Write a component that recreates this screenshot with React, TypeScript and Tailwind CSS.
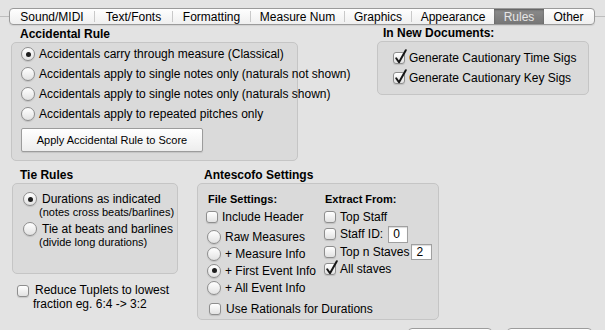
import React from "react";

function Radio({ checked = false }: { checked?: boolean }) {
  return (
    <span className="flex h-[14px] w-[14px] shrink-0 items-center justify-center rounded-full border border-[#8e8e8e] bg-linear-to-b from-[#ffffff] to-[#e2e2e2] shadow-[0_1px_1px_rgba(0,0,0,0.12)]">
      {checked && <span className="h-[5px] w-[5px] rounded-full bg-[#1e1e1e]" />}
    </span>
  );
}

function Check({ checked = false }: { checked?: boolean }) {
  return (
    <span className="relative block h-[12px] w-[12px] shrink-0 rounded-[3px] border border-[#8e8e8e] bg-linear-to-b from-[#ffffff] to-[#e2e2e2] shadow-[0_1px_1px_rgba(0,0,0,0.12)]">
      {checked && (
        <svg className="absolute left-[0px] top-[-4px] overflow-visible" width="14" height="16" viewBox="0 0 14 16">
          <path d="M2.2 9.2 L5 13.2 L11.8 1.2" fill="none" stroke="#161616" strokeWidth="2" strokeLinecap="round" strokeLinejoin="round" />
        </svg>
      )}
    </span>
  );
}

const tabs: { label: string; w: string; sep: boolean; active?: boolean }[] = [
  { label: "Sound/MIDI", w: "w-[84px]", sep: true },
  { label: "Text/Fonts", w: "w-[77px]", sep: true },
  { label: "Formatting", w: "w-[77px]", sep: true },
  { label: "Measure Num", w: "w-[93px]", sep: true },
  { label: "Graphics", w: "w-[66px]", sep: true },
  { label: "Appearance", w: "w-[82px]", sep: false },
  { label: "Rules", w: "w-[50px]", sep: false, active: true },
  { label: "Other", w: "w-[49px]", sep: false },
];

export default function App() {
  return (
    <div className="relative h-[330px] w-[605px] overflow-hidden bg-[#e3e3e3] font-['Liberation_Sans',Arial,sans-serif] text-[12px] leading-[14px] text-black">
      {/* Tab bar */}
      <div className="relative h-[25px] pl-[9px] pt-[8px]">
        <div className="absolute left-0 right-0 top-[16px] h-px bg-[#bdbdbd]" />
        <div className="relative flex h-[17px] w-[586px] overflow-hidden rounded-[4px] border border-[#9a9a9a] bg-linear-to-b from-[#fefefe] to-[#efefef] shadow-[0_1px_1px_rgba(0,0,0,0.08)]">
          {tabs.map((t) => (
            <React.Fragment key={t.label}>
              <div
                className={
                  t.w +
                  " flex h-full items-center justify-center " +
                  (t.active
                    ? "bg-linear-to-b from-[#8c8c8c] to-[#767676] text-[#e6e6e6] shadow-[inset_0_1px_2px_rgba(0,0,0,0.35)]"
                    : "text-black")
                }
              >
                {t.label}
              </div>
              {t.sep && <span className="h-[11px] w-px self-center bg-[#c9c9c9]" />}
            </React.Fragment>
          ))}
        </div>
      </div>

      {/* Row 1 */}
      <div className="mt-[1px] flex items-start">
        <div className="ml-[11px] w-[287px]">
          <div className="h-[16px] pl-[9px] font-bold leading-[16px]">Accidental Rule</div>
          <div className="h-[119px] rounded-[5px] border border-[#c5c5c5] bg-[#dadada] pl-[9px] pt-[1px]">
            {[
              "Accidentals carry through measure (Classical)",
              "Accidentals apply to single notes only (naturals not shown)",
              "Accidentals apply to single notes only (naturals shown)",
              "Accidentals apply to repeated pitches only",
            ].map((s, i) => (
              <div key={s} className="flex h-[20px] items-center whitespace-nowrap">
                <Radio checked={i === 0} />
                <span className="ml-[4px]">{s}</span>
              </div>
            ))}
            <div className="mt-[4px] flex h-[24px] w-[182px] items-center justify-center rounded-[2px] border border-[#9c9c9c] bg-linear-to-b from-[#ffffff] to-[#ededed] text-[11px] shadow-[0_1px_1px_rgba(0,0,0,0.1)]">
              Apply Accidental Rule to Score
            </div>
          </div>
        </div>

        <div className="ml-[79px] w-[212px]">
          <div className="h-[15px] pl-[6px] font-bold leading-[15px]">In New Documents:</div>
          <div className="h-[54px] rounded-[5px] border border-[#c5c5c5] bg-[#dadada] pl-[15px] pt-[6px]">
            {["Generate Cautionary Time Sigs", "Generate Cautionary Key Sigs"].map((s) => (
              <div key={s} className="flex h-[20px] items-center whitespace-nowrap">
                <Check checked />
                <span className="ml-[4px]">{s}</span>
              </div>
            ))}
          </div>
        </div>
      </div>

      {/* Row 2 */}
      <div className="mt-[6px] flex items-start">
        <div className="ml-[12px] w-[166px]">
          <div className="h-[16px] pl-[8px] font-bold leading-[16px]">Tie Rules</div>
          <div className="h-[91px] rounded-[5px] border border-[#c5c5c5] bg-[#dadada] pl-[10px] pt-[8px]">
            <div className="flex items-start">
              <Radio checked />
              <div className="ml-[5px] flex flex-col whitespace-nowrap">
                <span className="leading-[14px]">Durations as indicated</span>
                <span className="ml-[-3px] text-[11px] leading-[12px]">(notes cross beats/barlines)</span>
              </div>
            </div>
            <div className="mt-[4px] flex items-start">
              <Radio />
              <div className="ml-[5px] flex flex-col whitespace-nowrap">
                <span className="leading-[14px]">Tie at beats and barlines</span>
                <span className="ml-[-3px] text-[11px] leading-[12px]">(divide long durations)</span>
              </div>
            </div>
          </div>
          <div className="ml-[5px] mt-[9px] flex items-start">
            <span className="mt-[2px]">
              <Check />
            </span>
            <div className="ml-[6px] flex flex-col whitespace-nowrap">
              <span>Reduce Tuplets to lowest</span>
              <span className="ml-[-2px]">fraction eg. 6:4 -&gt; 3:2</span>
            </div>
          </div>
        </div>

        <div className="ml-[19px] w-[242px]">
          <div className="h-[16px] pl-[7px] font-bold leading-[16px]">Antescofo Settings</div>
          <div className="h-[137px] rounded-[5px] border border-[#c5c5c5] bg-[#dadada] pt-[8px]">
            <div className="flex pl-[8px]">
              <div className="w-[118px]">
                <div className="h-[14px] pl-[2px] text-[11px] font-bold leading-[14px]">File Settings:</div>
                <div className="mt-[3px] flex h-[16px] items-center whitespace-nowrap">
                  <Check />
                  <span className="ml-[4px]">Include Header</span>
                </div>
                <div className="mt-[4px]">
                  {["Raw Measures", "+ Measure Info", "+ First Event Info", "+ All Event Info"].map((s, i) => (
                    <div
                      key={s}
                      className={(i === 0 ? "h-[16px]" : "h-[17px]") + " flex items-center whitespace-nowrap pl-[1px]"}
                    >
                      <Radio checked={i === 2} />
                      <span className="ml-[4px]">{s}</span>
                    </div>
                  ))}
                </div>
              </div>
              <div className="flex-1">
                <div className="h-[14px] pl-[1px] text-[11px] font-bold leading-[14px]">Extract From:</div>
                <div className="mt-[3px] flex h-[16px] items-center whitespace-nowrap">
                  <Check />
                  <span className="ml-[4px]">Top Staff</span>
                </div>
                <div className="flex h-[18px] items-center whitespace-nowrap">
                  <Check />
                  <span className="ml-[4px]">Staff ID:</span>
                  <span className="ml-[5px] flex h-[17px] w-[20px] items-center border border-[#a0a0a0] bg-white pl-[4px] shadow-[inset_0_1px_1px_rgba(0,0,0,0.15)]">0</span>
                </div>
                <div className="flex h-[18px] items-center whitespace-nowrap">
                  <Check />
                  <span className="ml-[4px]">Top n Staves</span>
                  <span className="ml-[2px] flex h-[16px] w-[21px] items-center border border-[#a0a0a0] bg-white pl-[4px] shadow-[inset_0_1px_1px_rgba(0,0,0,0.15)]">2</span>
                </div>
                <div className="flex h-[16px] items-center whitespace-nowrap">
                  <Check checked />
                  <span className="ml-[4px]">All staves</span>
                </div>
              </div>
            </div>
            <div className="mt-[6px] flex h-[14px] items-center whitespace-nowrap pl-[11px]">
              <Check />
              <span className="ml-[5px]">Use Rationals for Durations</span>
            </div>
          </div>
        </div>
      </div>

      {/* Bottom buttons (cut off) */}
      <div className="mt-[8px] flex gap-[15px] pl-[408px]">
        <div className="h-[22px] w-[84px] rounded-[4px] border border-[#9c9c9c] bg-linear-to-b from-[#ffffff] to-[#ededed]" />
        <div className="h-[22px] w-[85px] rounded-[4px] border border-[#9c9c9c] bg-linear-to-b from-[#ffffff] to-[#ededed]" />
      </div>
    </div>
  );
}
